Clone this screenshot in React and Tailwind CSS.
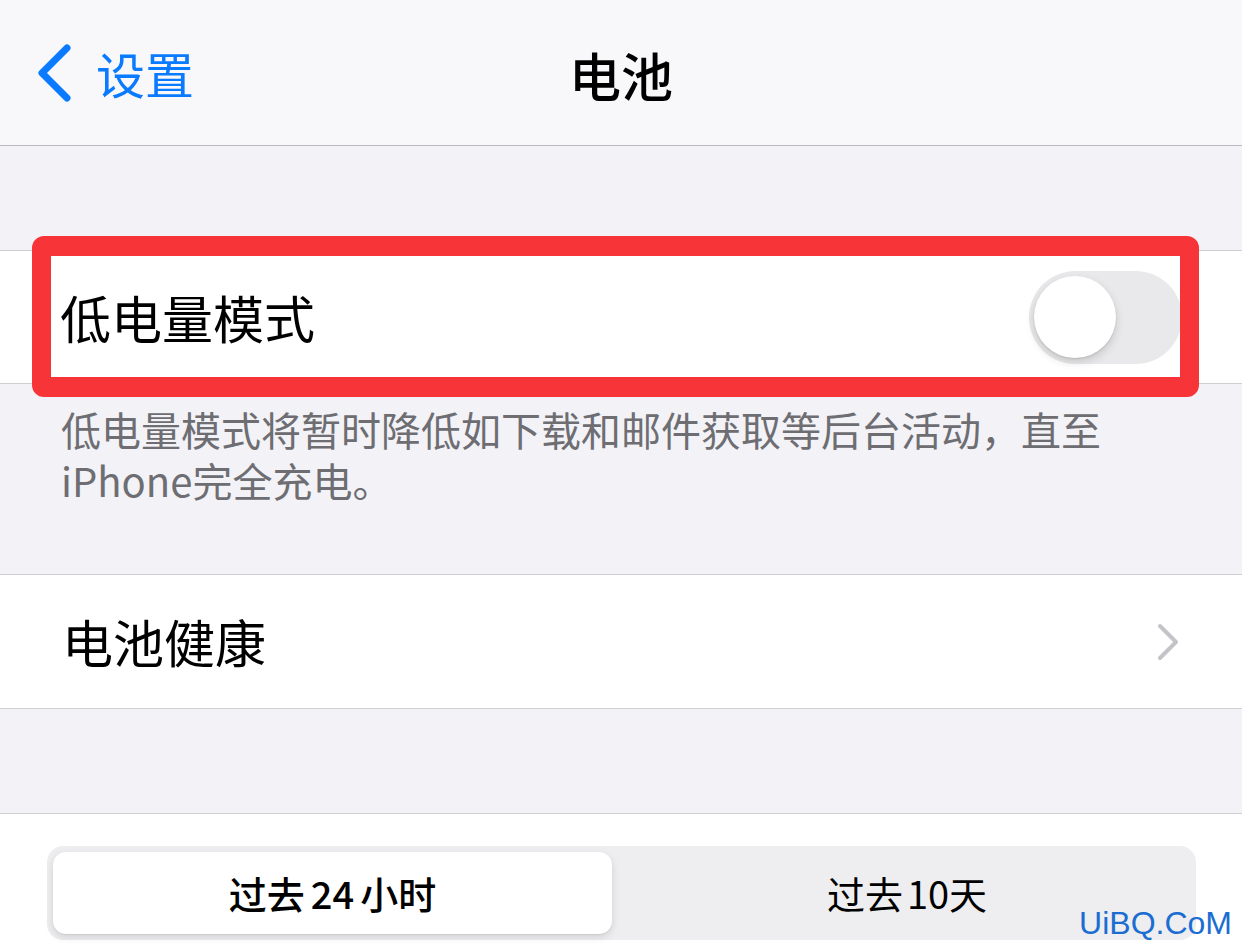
import React from "react";

const font = { fontFamily: '"Noto Sans CJK SC", "Noto Sans", sans-serif' };

function BackChevron() {
  return (
    <svg width="36" height="58" viewBox="0 0 36 58" fill="none">
      <path d="M31 4 L6 29 L31 54" stroke="#0a7aff" strokeWidth="7" strokeLinecap="round" strokeLinejoin="round" />
    </svg>
  );
}

function RowChevron() {
  return (
    <svg width="24" height="40" viewBox="0 0 24 40" fill="none">
      <path d="M4 4 L20 20 L4 36" stroke="#c4c4c8" strokeWidth="4" strokeLinecap="round" strokeLinejoin="round" />
    </svg>
  );
}

function Toggle() {
  return (
    <div className="w-[153px] h-[93px] rounded-full bg-[#e9e9eb] flex items-center px-[5px]">
      <div className="w-[82px] h-[82px] rounded-full bg-white shadow-[0_4px_10px_rgba(0,0,0,0.15),0_1px_2px_rgba(0,0,0,0.1)]" />
    </div>
  );
}

export default function App() {
  return (
    <div className="w-[1242px] h-[951px] bg-[#f2f2f7] overflow-hidden relative" style={font}>
      {/* nav bar */}
      <div className="h-[146px] bg-[#f8f8fa] border-b border-[#bcbcc0] grid grid-cols-[1fr_auto_1fr] items-center">
        <div className="flex items-center pl-[36px] gap-[24px]">
          <BackChevron />
          <span className="text-[49px] leading-none text-[#0a7aff]">设置</span>
        </div>
        <div className="text-[52px] leading-none font-medium text-black pt-[4px]">电池</div>
        <div />
      </div>

      <div className="h-[104px]" />

      {/* low power mode row */}
      <div className="relative h-[134px] bg-white border-y border-[#cfced3] flex items-center justify-between pl-[60px] pr-[60px]">
        <span className="text-[51px] leading-none text-black">低电量模式</span>
        <Toggle />
        <div className="absolute -top-[15px] -bottom-[14px] left-[32px] right-[43px] border-[#f73438] border-y-[20px] border-x-[19px] rounded-[12px]" />
      </div>

      <div className="pt-[20px] pl-[61px] pr-[130px] text-[40px] leading-[51px] text-[#6d6d72]">
        低电量模式将暂时降低如下载和邮件获取等后台活动，直至iPhone完全充电。
      </div>

      <div className="h-[68px]" />

      {/* battery health row */}
      <div className="h-[135px] bg-white border-y border-[#cfced3] flex items-center justify-between pl-[62px] pr-[62px]">
        <span className="text-[51px] leading-none text-black">电池健康</span>
        <RowChevron />
      </div>

      <div className="h-[104px]" />

      {/* usage section */}
      <div className="bg-white border-t border-[#cfced3] pt-[32px] h-[300px]">
        <div className="ml-[47px] w-[1149px] h-[94px] rounded-[16px] bg-[#eeeef0] p-[6px] flex">
          <div className="w-[559px] rounded-[13px] bg-white shadow-[0_3px_8px_rgba(0,0,0,0.12),0_1px_1px_rgba(0,0,0,0.06)] flex items-center justify-center">
            <span className="text-[38px] leading-none font-medium text-black flex gap-[6px]">
              <span>过去</span>
              <span>24</span>
              <span>小时</span>
            </span>
          </div>
          <div className="flex-1 flex items-center justify-center pl-[12px]">
            <span className="text-[38px] leading-none text-black flex gap-[4px]">
              <span>过去</span>
              <span>10天</span>
            </span>
          </div>
        </div>
      </div>

      <div className="absolute right-[10px] bottom-[12px] text-[32px] leading-none text-[#1b6dd1]" style={{ fontFamily: '"Liberation Sans", sans-serif' }}>
        UiBQ.CoM
      </div>
    </div>
  );
}
